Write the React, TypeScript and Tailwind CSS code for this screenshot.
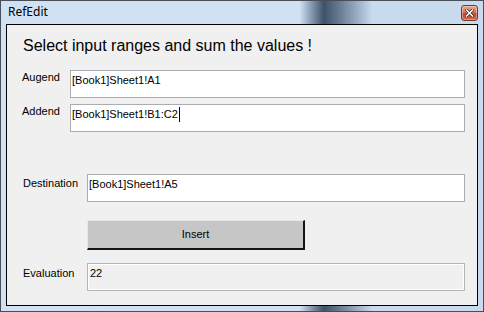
function CloseButton() {
  return (
    <div className="flex h-[16px] w-[17px] items-center justify-center rounded-[3px] border border-[#6b3b30] bg-[linear-gradient(to_bottom,#e9a78f_0%,#d9775a_45%,#c2462a_55%,#d2664a_100%)] shadow-[inset_0_0_0_1px_rgba(255,255,255,0.35)]">
      <svg width="9" height="8" viewBox="0 0 9 8">
        <path d="M1.5 1 L7.5 7 M7.5 1 L1.5 7" stroke="#3a2a28" strokeWidth="3" strokeLinecap="square" />
        <path d="M1.5 1 L7.5 7 M7.5 1 L1.5 7" stroke="#ffffff" strokeWidth="1.5" strokeLinecap="square" />
      </svg>
    </div>
  );
}

function TextBox({ value, caret }: { value: string; caret?: boolean }) {
  return (
    <div className="flex h-[28px] flex-1 items-start border border-[#abadb3] bg-white pl-[1px] pt-[3px] text-[11px] leading-[13px] text-black">
      <span>{value}</span>
      {caret && <span className="ml-[1px] mt-[-1px] h-[15px] w-[1px] bg-black" />}
    </div>
  );
}

export default function App() {
  return (
    <div className="flex h-[312px] w-[484px] flex-col border border-[#4a4f57] bg-linear-to-r from-[#d0e1f3] from-62% via-[#3e526a] via-67% to-[#c8daee] to-77% font-['Liberation_Sans',Arial,sans-serif]">
      <div className="flex h-[23px] items-start justify-between pl-[7px] pr-[5px]">
        <span className="pt-[3px] font-['Noto_Sans','Open_Sans',sans-serif] text-[12px] leading-[16px] text-black">
          RefEdit
        </span>
        <div className="pt-[4px]">
          <CloseButton />
        </div>
      </div>

      <div className="mx-[5px] flex h-[282px] flex-col border border-black bg-[#f0f0f0]">
        <h1 className="mt-[12px] pl-[16px] text-[16px] leading-[18px] text-black">
          Select input ranges and sum the values !
        </h1>

        <div className="mt-[15px] flex pl-[15px] pr-[12px]">
          <span className="w-[48px] pt-[1px] text-[11px] leading-[13px] text-black">Augend</span>
          <TextBox value="[Book1]Sheet1!A1" />
        </div>

        <div className="mt-[6px] flex pl-[15px] pr-[12px]">
          <span className="w-[48px] pt-[1px] text-[11px] leading-[13px] text-black">Addend</span>
          <TextBox value="[Book1]Sheet1!B1:C2" caret />
        </div>

        <div className="mt-[42px] flex pl-[16px] pr-[12px]">
          <span className="w-[64px] pt-[3px] text-[11px] leading-[13px] text-black">Destination</span>
          <TextBox value="[Book1]Sheet1!A5" />
        </div>

        <div className="mt-[18px] flex pl-[80px]">
          <button className="flex h-[30px] w-[218px] items-center justify-center border-t border-l border-t-[#e8e8e8] border-l-[#e8e8e8] border-b-2 border-r-2 border-b-[#141414] border-r-[#141414] bg-[#c6c6c6] text-[11px] text-black">
            Insert
          </button>
        </div>

        <div className="mt-[13px] flex pl-[16px] pr-[12px]">
          <span className="w-[64px] pt-[4px] text-[11px] leading-[13px] text-black">Evaluation</span>
          <div className="h-[28px] flex-1 border border-[#b4b4b4] bg-[#f0f0f0] pl-[2px] pt-[3px] text-[11px] leading-[13px] text-black shadow-[inset_1px_1px_0_#ffffff,inset_-1px_-1px_0_#ffffff]">
            22
          </div>
        </div>
      </div>
    </div>
  );
}
